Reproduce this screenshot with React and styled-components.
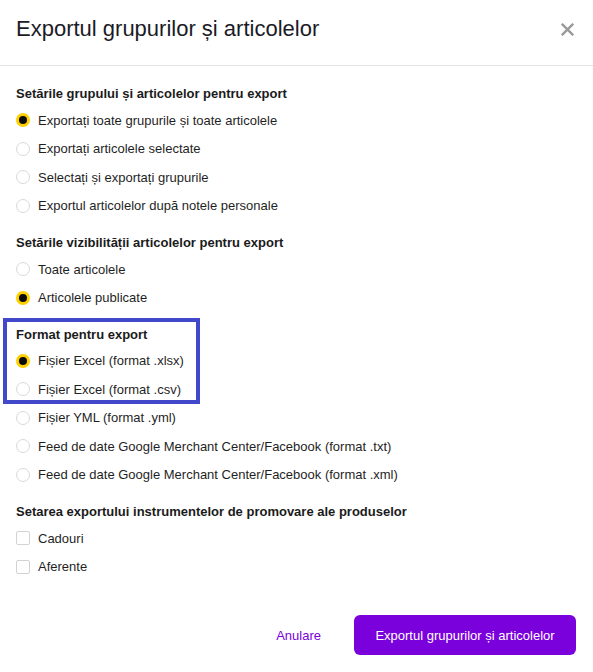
import React, { useState } from "react";
import styled, { createGlobalStyle } from "styled-components";

const GlobalStyle = createGlobalStyle`
  html, body {
    margin: 0;
    padding: 0;
    background: #ffffff;
  }
  body {
    font-family: "Liberation Sans", Arial, sans-serif;
    color: #1f1f1f;
  }
`;

const Modal = styled.div`
  position: relative;
  width: 593px;
  height: 672px;
  background: #fff;
  display: flex;
  flex-direction: column;
`;

const Header = styled.div`
  display: flex;
  align-items: center;
  justify-content: space-between;
  padding: 0 16px;
  border-bottom: 1px solid #e2e2e2;
  box-sizing: border-box;
  height: 66px;
`;

const Title = styled.h1`
  margin: -7px 0 0;
  font-size: 22px;
  font-weight: 400;
  color: #1b1b26;
  line-height: 28px;
`;

const CloseButton = styled.button`
  border: 0;
  background: none;
  padding: 0;
  width: 16px;
  height: 16px;
  margin: -7px 2px 0 0;
  cursor: pointer;
  display: flex;
  align-items: center;
  justify-content: center;
`;

const Body = styled.div`
  position: relative;
  padding: 19px 16px 0;
  display: flex;
  flex-direction: column;
  gap: 13.75px;
`;

const Section = styled.div`
  display: flex;
  flex-direction: column;
`;

const SectionTitle = styled.div`
  font-size: 13px;
  font-weight: 700;
  line-height: 18px;
  color: #1b1b1b;
  margin-bottom: 3px;
`;

const Option = styled.label`
  display: flex;
  align-items: center;
  gap: 8px;
  height: 28.5px;
  font-size: 13px;
  color: #1f1f1f;
  cursor: pointer;
`;

const RadioMark = styled.span`
  width: 14px;
  height: 14px;
  border-radius: 50%;
  box-sizing: border-box;
  flex-shrink: 0;
  border: ${(p) => (p.$checked ? "3px solid #ffd000" : "1px solid #d9d9d9")};
  background: ${(p) => (p.$checked ? "#0b0b0b" : "#fff")};
`;

const CheckMark = styled.span`
  width: 14px;
  height: 14px;
  border-radius: 2px;
  box-sizing: border-box;
  flex-shrink: 0;
  border: 1px solid #d3d3d3;
  background: #fff;
`;

const Highlight = styled.div`
  position: absolute;
  left: 3px;
  top: 252px;
  width: 197px;
  height: 86px;
  border: 4px solid #4148c9;
  box-sizing: border-box;
  pointer-events: none;
`;

const Footer = styled.div`
  margin-top: auto;
  display: flex;
  justify-content: flex-end;
  align-items: center;
  gap: 33px;
  padding: 0 17px 17px 0;
`;

const CancelButton = styled.button`
  border: 0;
  background: none;
  padding: 0;
  font-family: inherit;
  font-size: 13px;
  color: #7a00d9;
  cursor: pointer;
`;

const PrimaryButton = styled.button`
  border: 0;
  height: 40px;
  width: 222px;
  border-radius: 6px;
  background: #7a00dc;
  color: #fff;
  font-family: inherit;
  font-size: 13px;
  cursor: pointer;
`;

const Radio = ({ checked, label, onClick }) => (
  <Option onClick={onClick}>
    <RadioMark $checked={checked} />
    {label}
  </Option>
);

const Checkbox = ({ label }) => (
  <Option>
    <CheckMark />
    {label}
  </Option>
);

const groupOptions = [
  "Exportați toate grupurile și toate articolele",
  "Exportați articolele selectate",
  "Selectați și exportați grupurile",
  "Exportul articolelor după notele personale",
];

const visibilityOptions = ["Toate articolele", "Articolele publicate"];

const formatOptions = [
  "Fișier Excel (format .xlsx)",
  "Fișier Excel (format .csv)",
  "Fișier YML (format .yml)",
  "Feed de date Google Merchant Center/Facebook (format .txt)",
  "Feed de date Google Merchant Center/Facebook (format .xml)",
];

export default function App() {
  const [group, setGroup] = useState(0);
  const [visibility, setVisibility] = useState(1);
  const [format, setFormat] = useState(0);

  return (
    <>
      <GlobalStyle />
      <Modal>
        <Header>
          <Title>Exportul grupurilor și articolelor</Title>
          <CloseButton aria-label="Închide">
            <svg width="13" height="13" viewBox="0 0 12 12">
              <path d="M1.5 1.5 L10.5 10.5 M10.5 1.5 L1.5 10.5" stroke="#9a9a9a" strokeWidth="2.2" strokeLinecap="square" />
            </svg>
          </CloseButton>
        </Header>
        <Body>
          <Section>
            <SectionTitle>Setările grupului și articolelor pentru export</SectionTitle>
            {groupOptions.map((o, i) => (
              <Radio key={o} label={o} checked={group === i} onClick={() => setGroup(i)} />
            ))}
          </Section>
          <Section>
            <SectionTitle>Setările vizibilității articolelor pentru export</SectionTitle>
            {visibilityOptions.map((o, i) => (
              <Radio key={o} label={o} checked={visibility === i} onClick={() => setVisibility(i)} />
            ))}
          </Section>
          <Section>
            <SectionTitle>Format pentru export</SectionTitle>
            {formatOptions.map((o, i) => (
              <Radio key={o} label={o} checked={format === i} onClick={() => setFormat(i)} />
            ))}
          </Section>
          <Section>
            <SectionTitle>Setarea exportului instrumentelor de promovare ale produselor</SectionTitle>
            <Checkbox label="Cadouri" />
            <Checkbox label="Aferente" />
          </Section>
          <Highlight />
        </Body>
        <Footer>
          <CancelButton>Anulare</CancelButton>
          <PrimaryButton>Exportul grupurilor și articolelor</PrimaryButton>
        </Footer>
      </Modal>
    </>
  );
}
